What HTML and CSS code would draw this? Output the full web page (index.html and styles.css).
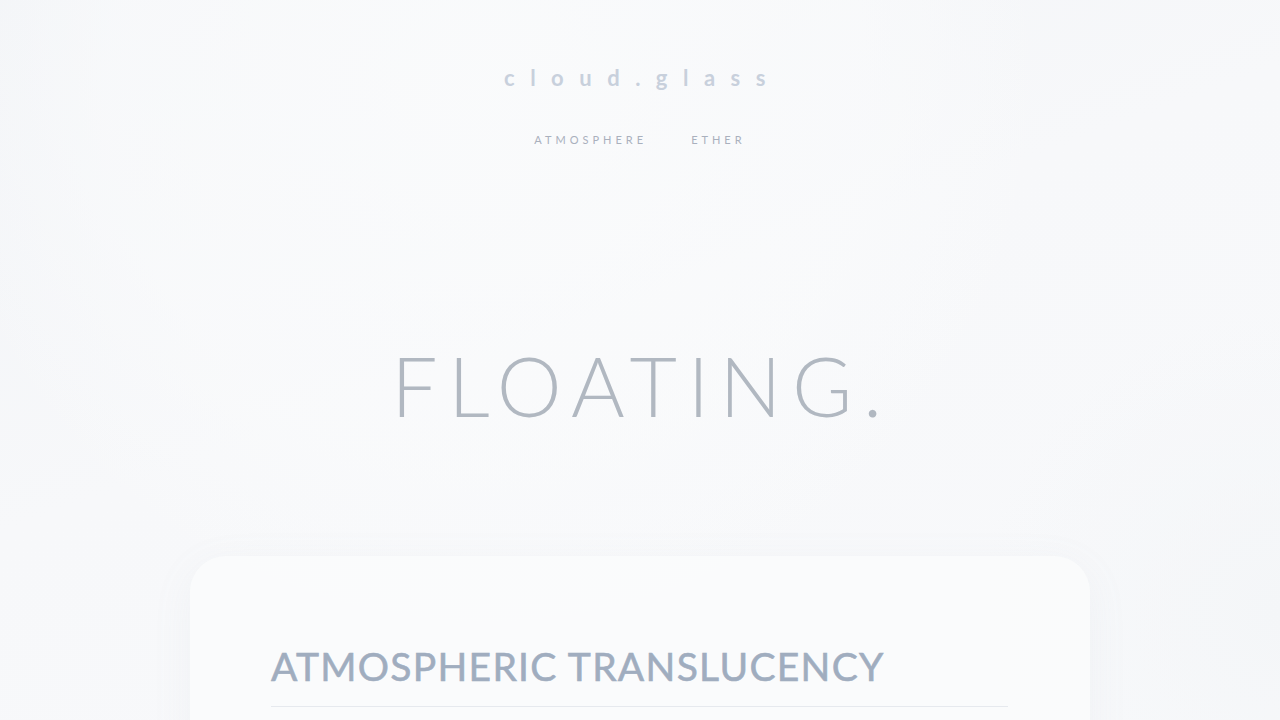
FILE: index.html
```html
<!DOCTYPE html>
<html lang="en">
<head>
<meta charset="utf-8">
<title>cloud.glass</title>
<link rel="stylesheet" href="styles.css">
</head>
<body>
<div class="page">
  <header class="header">
    <div class="logo">cloud.glass</div>
    <nav class="nav">
      <a class="nav-link" href="#">Atmosphere</a>
      <a class="nav-link" href="#">Ether</a>
    </nav>
  </header>
  <section class="hero">
    <h1 class="hero-title">FLOATING.</h1>
  </section>
  <section class="card">
    <h2 class="card-title">Atmospheric Translucency</h2>
    <div class="card-rule"></div>
  </section>
</div>
</body>
</html>
```
FILE: styles.css
```css
html, body {
  margin: 0;
  padding: 0;
  height: 100%;
  overflow: hidden;
}
body {
  font-family: "Lato", "Noto Sans", sans-serif;
  background:
    radial-gradient(circle at 38% 12%, rgba(250,251,252,0.9) 0, rgba(250,251,252,0.6) 380px, rgba(243,245,248,0) 560px),
    radial-gradient(circle at 100% 85%, rgba(244,246,248,1) 0, rgba(247,248,250,0) 300px),
    linear-gradient(160deg, #f2f4f7 0%, #f7f8fa 45%, #f8f9fb 100%);
}
.page {
  display: flex;
  flex-direction: column;
  align-items: center;
}
.header {
  display: flex;
  flex-direction: column;
  align-items: center;
  padding-top: 64px;
}
.logo {
  font-size: 22px;
  line-height: 28px;
  letter-spacing: 15.5px;
  margin-right: -5px;
  color: #c8d0dc;
  font-weight: 700;
}
.nav {
  display: flex;
  gap: 44px;
  margin-top: 40px;
}
.nav-link {
  font-size: 11px;
  line-height: 16px;
  letter-spacing: 4px;
  text-transform: uppercase;
  color: #a9b0bd;
  text-decoration: none;
}
.hero {
  margin-top: 196px;
}
.hero-title {
  margin: 0;
  font-size: 82px;
  line-height: 82px;
  font-weight: 300;
  letter-spacing: 10.6px;
  margin-right: -4px;
  color: #b1b8c1;
}
.card {
  margin-top: 130px;
  width: 900px;
  box-sizing: border-box;
  padding: 86px 82px 0 81px;
  min-height: 400px;
  border-radius: 36px;
  background: rgba(250,251,252,0.85);
  box-shadow: 0 10px 40px rgba(150,160,175,0.08);
}
.card-title {
  margin: 0;
  font-size: 39px;
  line-height: 48px;
  font-weight: 400;
  letter-spacing: 1.3px;
  text-transform: uppercase;
  color: #a0adbf;
  -webkit-text-stroke: 0.6px #a0adbf;
}
.card-rule {
  margin-top: 16px;
  height: 1px;
  background: #e6e9ee;
}
```
